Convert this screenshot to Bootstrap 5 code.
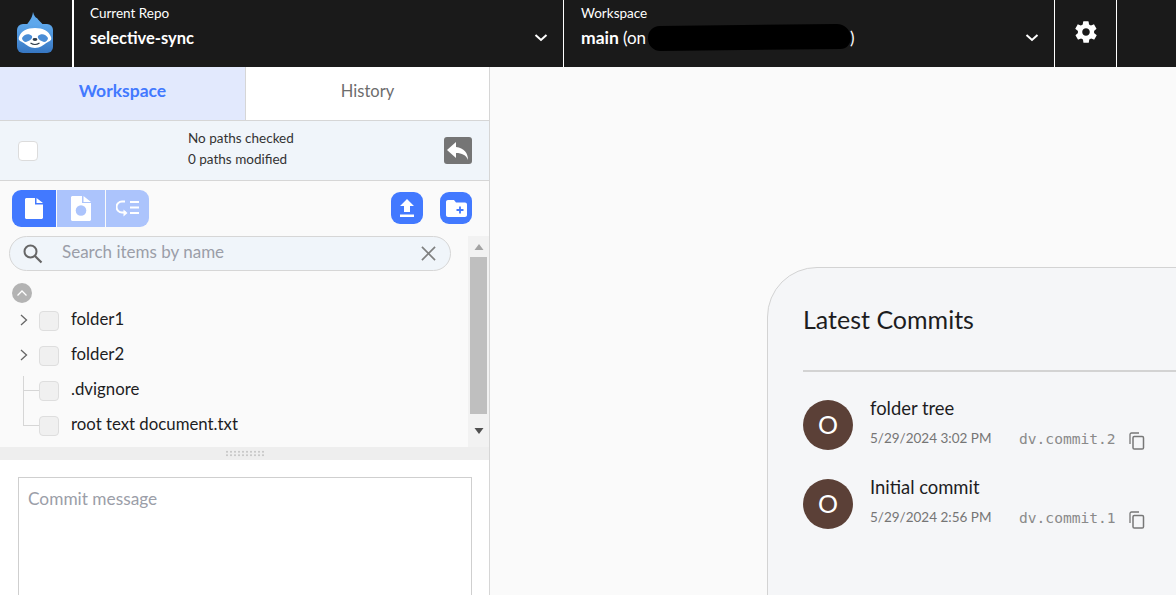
<!DOCTYPE html>
<html lang="en">
<head>
<meta charset="utf-8">
<title>Selective sync</title>
<link href="https://cdn.jsdelivr.net/npm/bootstrap@5.3.0/dist/css/bootstrap.min.css" rel="stylesheet">
<style>
html,body{height:595px;overflow:hidden}
body{font-family:Lato,"Liberation Sans",sans-serif;background:#fafafa;color:#1d1d1f;width:1176px}
.topbar{height:67px;background:#1a1a1a;color:#fff}
.logo-cell{width:74px;border-right:2px solid #fff}
.repo-cell{width:490px;border-right:1px solid #fff;padding:5px 15px 0 16px}
.ws-cell{width:491px;border-right:1px solid #fff;padding:5px 15px 0 17px;position:relative}
.gear-cell{width:62px;border-right:1px solid #fff}
.lab{font-size:13.5px;line-height:16px}
.val{font-size:16.5px;font-weight:700;line-height:20px;margin-top:7px}
.val-main{font-size:17.5px}
.val-on{font-weight:400;font-size:17px}
.val-end{font-weight:400;font-size:17px;margin-left:204px}
.chev{margin-top:7px}
.scribble{position:absolute;left:84px;top:25px;width:203px;height:25px;background:#000;border-radius:13px 16px 12px 14px;transform:rotate(-.7deg)}
.side{width:490px;height:528px;border-right:1px solid #d6d6d6;background:#fff}
.tabs{height:54px;border-bottom:1px solid #d6d6d6}
.tab-on{width:246px;background:#e2e9fd;color:#4279ff;font-weight:700;font-size:17.5px;border-right:1px solid #d6d6d6;padding-bottom:4px}
.tab-off{color:#6d6d6d;font-size:16.5px;padding-bottom:4px}
.status{height:60px;background:#f0f5fa;border-bottom:1px solid #d6d6d6;padding:0 17px 4px 18px;font-size:13.5px;color:#333}
.status p{line-height:21px;margin:0}
.status-txt{margin-left:150px}
.status .cbx{margin-top:4px}
.status .revert{margin-top:4px}
.cbx{width:20px;height:20px;border:1px solid #dcdcdc;border-radius:4px;background:#fff;flex:none}
.cbx-row{background:#f0f0f0;border-color:#dedede}
.revert{width:28px;height:27px;background:#757575;border-radius:3px}
.tools{height:55px;background:#fafafa;padding:9px 17px 0 12px}
.seg{height:37px;width:137px;border-radius:9px;overflow:hidden}
.seg-a{width:44px;background:#4279ff}
.seg-b{width:48px;background:#acc4fc;margin-left:1px}
.seg-c{width:43px;background:#acc4fc;margin-left:1px}
.act{width:32px;height:32px;border-radius:9px;background:#4279ff;margin-top:2px}
.tool-acts{gap:17px}
.pane{height:211px;background:#fafafa}
.pane-main{width:468px;padding-left:9px}
.search{width:442px;height:35px;border:1px solid #d6d6d6;border-radius:18px;background:#f0f5fa;padding:0 14px 4px 12px;font-size:17px;color:#9b9ea8}
.search svg{margin-top:4px}
.collapse-b{width:20px;height:20px;border-radius:50%;background:#b3b3b3;margin:12px 0 0 3px}
.row-t{height:35px;font-size:16.8px;color:#1d1d1f;position:relative;padding-bottom:2px}
.row-t .cbx{margin-left:30px;margin-right:12px;margin-top:4px}
.row-1{margin-top:-1px}
.caret{position:absolute;left:11px;top:12px}
.tline{position:absolute;left:14px;border-left:1px solid #d6d6d6;border-bottom:1px solid #d6d6d6;width:16px}
.tline-a{top:4px;height:15px}
.tline-b{top:-16px;height:35px}
.sb{width:21px;background:#f2f2f2}
.sb-top,.sb-bot{height:21px}
.sb-thumb{height:157px;background:#bfbfbf;margin:0 2px}
.split{height:13px;background:#eee}
.grip{width:40px;height:7px;background-image:radial-gradient(#c9c9c9 1px,transparent 1.2px);background-size:4px 3.5px}
.commit{height:135px;background:#fff;padding:17px 17px 0 18px}
.cmsg{height:130px;border:1px solid #cfcfcf;padding:11px 9px;font-size:17.3px;color:#9b9ea8;line-height:20px}
.main-a{height:528px;background:#fafafa;padding:200px 0 0 277px;overflow:hidden}
.cardbox{width:500px;height:400px;background:#f5f6f8;border:1px solid #d3d3d3;border-top-left-radius:50px;padding:34px 0 0 35px}
.cardbox h2{font-size:25px;font-weight:400;line-height:34px;margin:0;color:#1d1d1f}
.rule{height:2px;background:#d3d3d3;margin-top:34px;margin-bottom:28px}
.ava{width:50px;height:50px;border-radius:50%;background:#5b4037;color:#fff;font-size:25px;flex:none;margin-right:17px}
.cm{height:79px}
.cm-t{font-size:18.4px;line-height:20px;margin-top:-2px}
.cm-d{font-size:13.5px;color:#757575;width:149px;margin-top:-3px}
.cm-h{font-family:"DejaVu Sans Mono","Liberation Mono",monospace;font-size:14.6px;color:#8a8a8a;width:110px;margin-top:-2px}
.cm-m{margin-top:12px;height:20px}
.cm-m svg{margin-top:1px}
</style>
</head>
<body>
<header class="topbar d-flex">
  <div class="logo-cell d-flex align-items-center justify-content-center">
    <svg width="38" height="44" viewBox="0 0 38 44" style="margin-right:2px;margin-top:-2px">
      <defs><linearGradient id="lg" x1="0" y1="0" x2="0" y2="1"><stop offset="0" stop-color="#5ea8ec"/><stop offset="1" stop-color="#3676c2"/></linearGradient></defs>
      <path d="M10 15C13 10 16 8 17 1c1 4 3 6 4 6 1 2 4 4 7 8z" fill="#5ea8ec"/>
      <rect x="1" y="13" width="36" height="29" rx="6" fill="url(#lg)"/>
      <path d="M19 17c8 0 14 3 16 9 1 3-1 4-3 5-5 3-8 6-13 6s-8-3-13-6c-2-1-4-2-3-5 2-6 8-9 16-9z" fill="#fff"/>
      <path d="M6 27c2-4 7-5 10-2 1 3-3 5-6 6-2 0-4-2-4-4zM32 27c-2-4-7-5-10-2-1 3 3 5 6 6 2 0 4-2 4-4z" fill="#4a8dd6"/>
      <ellipse cx="19" cy="28.500" rx="2.400" ry="1.400" fill="#2d3a48"/>
      <path d="M14.500 32c3 2 6 2 9 0" stroke="#2d3a48" stroke-width="1.100" fill="none"/>
    </svg>
  </div>
  <div class="repo-cell d-flex justify-content-between">
    <div><div class="lab">Current Repo</div><div class="val">selective-sync</div></div>
    <svg class="chev" width="14" height="40" viewBox="0 0 14 40"><path d="M1.500 23l5.500 5 5.500-5" stroke="#fff" stroke-width="2" fill="none"/></svg>
  </div>
  <div class="ws-cell d-flex justify-content-between">
    <div><div class="lab">Workspace</div><div class="val"><span class="val-main">main</span> <span class="val-on">(on</span><span class="scribble"></span><span class="val-end">)</span></div></div>
    <svg class="chev" width="14" height="40" viewBox="0 0 14 40"><path d="M1.500 23l5.500 5 5.500-5" stroke="#fff" stroke-width="2" fill="none"/></svg>
  </div>
  <div class="gear-cell d-flex align-items-center justify-content-center">
    <svg width="26" height="26" viewBox="0 0 24 24" style="margin-top:-3px"><path fill="#fff" d="M19.400 13c.1-.3.1-.7.1-1s0-.7-.1-1l2.100-1.700c.2-.2.2-.4.1-.6l-2-3.500c-.1-.2-.4-.3-.6-.2l-2.500 1c-.5-.4-1.100-.7-1.700-1l-.4-2.600c0-.2-.2-.4-.5-.4h-4c-.2 0-.5.2-.5.4l-.4 2.600c-.6.3-1.200.6-1.700 1l-2.500-1c-.2-.1-.5 0-.6.2l-2 3.500c-.1.2-.1.5.1.6L4.600 11c0 .3-.1.7-.1 1s0 .7.1 1l-2.100 1.700c-.2.2-.2.4-.1.6l2 3.500c.1.2.4.3.6.2l2.500-1c.5.4 1.100.7 1.700 1l.4 2.600c0 .2.2.4.5.4h4c.2 0 .5-.2.5-.4l.4-2.600c.6-.3 1.200-.6 1.700-1l2.500 1c.2.1.5 0 .6-.2l2-3.500c.1-.2.1-.5-.1-.6L19.400 13zM12 15.500c-1.900 0-3.500-1.600-3.500-3.500s1.600-3.500 3.500-3.500 3.500 1.600 3.500 3.500-1.600 3.500-3.500 3.500z"/></svg>
  </div>
</header>
<div class="d-flex">
  <aside class="side flex-shrink-0">
    <div class="tabs d-flex">
      <div class="tab-on d-flex align-items-center justify-content-center">Workspace</div>
      <div class="tab-off flex-grow-1 d-flex align-items-center justify-content-center">History</div>
    </div>
    <div class="status d-flex align-items-center">
      <div class="cbx"></div>
      <div class="status-txt"><p>No paths checked</p><p>0 paths modified</p></div>
      <div class="revert d-flex align-items-center justify-content-center ms-auto">
        <svg width="24" height="20" viewBox="0 0 24 20"><path fill="#fff" d="M10 1L1 9l9 8v-5c6 0 10 2 12 7 0-7-4-12-12-13z"/></svg>
      </div>
    </div>
    <div class="tools d-flex justify-content-between">
      <div class="seg d-flex">
        <div class="seg-a d-flex align-items-center justify-content-center">
          <svg width="18" height="21" viewBox="0 0 18 21"><path fill="#fff" d="M1.500 0H10v6.500h8v13c0 .8-.7 1.500-1.500 1.500h-15C.7 21 0 20.300 0 19.500v-18C0 .7.700 0 1.500 0zM11.500 0L18 5h-6.500z"/></svg>
        </div>
        <div class="seg-b d-flex align-items-center justify-content-center">
          <svg width="20" height="25" viewBox="0 0 20 25"><path fill="#fff" d="M1.500 0H11v7h9v16.500c0 .8-.7 1.500-1.500 1.500h-17C.7 25 0 24.300 0 23.500v-22C0 .7.700 0 1.500 0zM12.500 0L20 6h-7.500z"/><circle cx="10" cy="14.500" r="5.300" fill="#acc4fc"/></svg>
        </div>
        <div class="seg-c d-flex align-items-center justify-content-center">
          <svg width="23" height="18" viewBox="0 0 23 18"><path d="M9 1.500H6a5.500 5.500 0 0 0 0 11h4" stroke="#fff" stroke-width="2" fill="none"/><path d="M7.500 9.500v7l4-3.500z" fill="#fff"/><path d="M14 2h9M14 7.500h9M14 13h9" stroke="#fff" stroke-width="2"/></svg>
        </div>
      </div>
      <div class="d-flex tool-acts">
        <div class="act d-flex align-items-center justify-content-center">
          <svg width="16" height="18" viewBox="0 0 16 18"><path fill="#fff" d="M8 0l7 7h-4v6H5V7H1zM1 15.500h14V18H1z"/></svg>
        </div>
        <div class="act d-flex align-items-center justify-content-center">
          <svg width="21" height="17" viewBox="0 0 21 17"><path fill="#fff" d="M2 0h6l2 2.500h9c1.100 0 2 .9 2 2V15c0 1.100-.9 2-2 2H2c-1.100 0-2-.9-2-2V2C0 .9.900 0 2 0z"/><path d="M14 6.500v7M10.500 10h7" stroke="#4279ff" stroke-width="1.800"/></svg>
        </div>
      </div>
    </div>
    <div class="pane d-flex">
      <div class="pane-main">
        <div class="search d-flex align-items-center">
          <svg width="21" height="21" viewBox="0 0 21 21" class="me-3"><circle cx="8.500" cy="8.500" r="6" stroke="#666" stroke-width="2" fill="none"/><path d="M13 13l6.500 6.500" stroke="#666" stroke-width="2.200"/></svg>
          <span class="flex-grow-1" style="margin-left:3px">Search items by name</span>
          <svg width="15" height="15" viewBox="0 0 16 16"><path d="M1 1l14 14M15 1L1 15" stroke="#808080" stroke-width="1.800"/></svg>
        </div>
        <div class="collapse-b d-flex align-items-center justify-content-center">
          <svg width="12" height="8" viewBox="0 0 12 8"><path d="M1.500 6.500L6 2l4.500 4.500" stroke="#fff" stroke-width="1.300" fill="none"/></svg>
        </div>
        <div class="row-t row-1 d-flex align-items-center"><svg class="caret" width="8" height="12" viewBox="0 0 8 12"><path d="M1 1l5.500 5L1 11" stroke="#666" stroke-width="1.300" fill="none"/></svg><div class="cbx cbx-row"></div>folder1</div>
        <div class="row-t d-flex align-items-center"><svg class="caret" width="8" height="12" viewBox="0 0 8 12"><path d="M1 1l5.500 5L1 11" stroke="#666" stroke-width="1.300" fill="none"/></svg><div class="cbx cbx-row"></div>folder2</div>
        <div class="row-t d-flex align-items-center"><span class="tline tline-a"></span><div class="cbx cbx-row"></div>.dvignore</div>
        <div class="row-t d-flex align-items-center"><span class="tline tline-b"></span><div class="cbx cbx-row"></div>root text document.txt</div>
      </div>
      <div class="sb d-flex flex-column">
        <div class="sb-top d-flex align-items-center justify-content-center"><svg width="10" height="6" viewBox="0 0 10 6"><path d="M5 0l4.500 6h-9z" fill="#a3a3a3"/></svg></div>
        <div class="sb-thumb"></div>
        <div class="flex-grow-1 d-flex align-items-center justify-content-center"><svg width="10" height="6" viewBox="0 0 10 6"><path d="M5 6L.5 0h9z" fill="#505050"/></svg></div>
      </div>
    </div>
    <div class="split d-flex align-items-center justify-content-center"><div class="grip"></div></div>
    <div class="commit"><div class="cmsg">Commit message</div></div>
  </aside>
  <main class="main-a flex-grow-1">
    <section class="cardbox">
      <h2>Latest Commits</h2>
      <div class="rule"></div>
      <div class="cm d-flex">
        <div class="ava d-flex align-items-center justify-content-center">O</div>
        <div>
          <div class="cm-t">folder tree</div>
          <div class="cm-m d-flex align-items-center">
            <span class="cm-d">5/29/2024 3:02 PM</span><span class="cm-h">dv.commit.2</span>
            <svg width="16" height="18" viewBox="0 0 16 18"><path d="M1 12V2.500C1 1.700 1.700 1 2.500 1H10" stroke="#777" stroke-width="1.300" fill="none"/><rect x="4" y="4.500" width="10.500" height="12.500" rx="1.300" stroke="#777" stroke-width="1.500" fill="none"/></svg>
          </div>
        </div>
      </div>
      <div class="cm d-flex">
        <div class="ava d-flex align-items-center justify-content-center">O</div>
        <div>
          <div class="cm-t">Initial commit</div>
          <div class="cm-m d-flex align-items-center">
            <span class="cm-d">5/29/2024 2:56 PM</span><span class="cm-h">dv.commit.1</span>
            <svg width="16" height="18" viewBox="0 0 16 18"><path d="M1 12V2.500C1 1.700 1.700 1 2.500 1H10" stroke="#777" stroke-width="1.300" fill="none"/><rect x="4" y="4.500" width="10.500" height="12.500" rx="1.300" stroke="#777" stroke-width="1.500" fill="none"/></svg>
          </div>
        </div>
      </div>
    </section>
  </main>
</div>
<script src="https://cdn.jsdelivr.net/npm/bootstrap@5.3.0/dist/js/bootstrap.bundle.min.js"></script>
</body>
</html>
